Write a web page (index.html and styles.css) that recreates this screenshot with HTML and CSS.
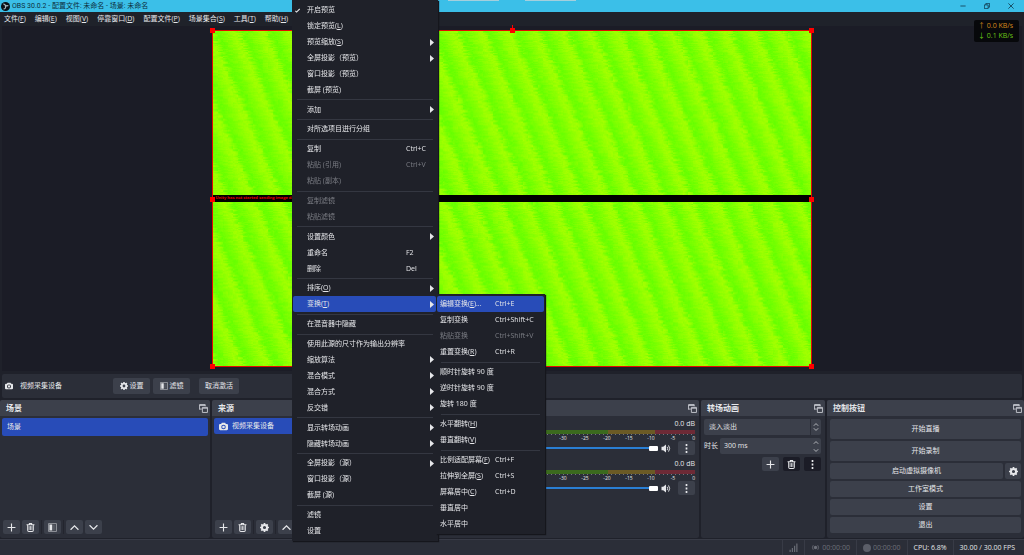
FILE: index.html
```html
<!DOCTYPE html>
<html lang="zh-CN">
<head>
<meta charset="utf-8">
<title>OBS 30.0.2 - 配置文件: 未命名 - 场景: 未命名</title>
<link rel="stylesheet" href="styles.css">
</head>
<body>
<svg class="sprite" aria-hidden="true">
  <symbol id="plus" viewBox="0 0 16 16"><path d="M8 1v14M1 8h14" fill="none" stroke="currentColor" stroke-width="2"/></symbol>
  <symbol id="trash" viewBox="0 0 16 16"><path d="M1 3h14M6 3V1h4v2M3 3v10q0 2 2 2h6q2 0 2-2V3" fill="none" stroke="currentColor" stroke-width="1.8"/><path d="M5.500 5.500v7M8 5.500v7M10.500 5.500v7" stroke="currentColor" stroke-width="1.400"/></symbol>
  <symbol id="filter" viewBox="0 0 16 16"><path d="M1 1h14v14H1z" fill="none" stroke="currentColor" stroke-width="1.300" opacity=".7"/><path d="M2.500 2.500h5v11h-5z" fill="currentColor"/><path d="M9.500 3v10M12 3v10" stroke="currentColor" opacity=".35"/></symbol>
  <symbol id="gear" viewBox="0 0 16 16"><circle cx="8" cy="8" r="4.600" fill="none" stroke="currentColor" stroke-width="3.600"/><path d="M8 0v3M8 13v3M0 8h3M13 8h3M2.300 2.300l2.200 2.200M11.500 11.500l2.200 2.200M13.700 2.300l-2.200 2.200M4.500 11.500l-2.200 2.200" stroke="currentColor" stroke-width="3"/></symbol>
  <symbol id="up" viewBox="0 0 16 16"><path d="M1 12l7-7 7 7" fill="none" stroke="currentColor" stroke-width="2.200"/></symbol>
  <symbol id="down" viewBox="0 0 16 16"><path d="M1 4l7 7 7-7" fill="none" stroke="currentColor" stroke-width="2.200"/></symbol>
  <symbol id="camera" viewBox="0 0 16 16"><path fill="currentColor" fill-rule="evenodd" d="M5 1.500h6l1.200 2H14q2 0 2 2v7q0 2-2 2H2q-2 0-2-2v-7q0-2 2-2h1.800zM8 5a4 4 0 100 8 4 4 0 000-8z"/><circle cx="8" cy="9" r="2.300" fill="currentColor"/></symbol>
  <symbol id="float" viewBox="0 0 16 16"><path d="M1 10V1h10v3M1 2.500h10M1 9h4" fill="none" stroke="currentColor" stroke-width="1.600"/><path d="M6 6h9v9H6zM6 7.500h9" fill="none" stroke="currentColor" stroke-width="1.600"/></symbol>
  <symbol id="dots" viewBox="0 0 16 16"><path d="M6.500 0h3v3.400h-3zM6.500 6.300h3v3.400h-3zM6.500 12.600h3V16h-3z" fill="currentColor"/></symbol>
  <symbol id="speaker" viewBox="0 0 16 16"><path d="M0 5h3l5-4v14l-5-4H0z" fill="currentColor"/><path d="M10 5q2 3 0 6M12.500 2.500q4 5.500 0 11" fill="none" stroke="currentColor" stroke-width="1.700"/></symbol>
  <symbol id="arrow" viewBox="0 0 8 14"><path d="M0 0l8 7-8 7z" fill="currentColor"/></symbol>
  <symbol id="check" viewBox="0 0 16 16"><path d="M1 9l4 4L15 3" fill="none" stroke="currentColor" stroke-width="3.500"/></symbol>
</svg>

<header class="titlebar">
  <svg class="logo" viewBox="0 0 16 16"><circle cx="8" cy="8" r="8" fill="#0a1016"/><path d="M4 3.500q4 0 4 4.500 3-3 5-.5M8 8q1 4-3.500 4.500" fill="none" stroke="#a9b9c0" stroke-width="2"/></svg>
  <span class="title">OBS 30.0.2 - 配置文件: 未命名 - 场景: 未命名</span>
  <span class="behind"><i></i><i></i></span>
  <span class="winbtns">
    <button type="button" aria-label="最小化"><svg viewBox="0 0 16 16"><path d="M1 8h14" stroke="currentColor" stroke-width="2"/></svg></button>
    <button type="button" aria-label="还原"><svg viewBox="0 0 16 16"><path d="M1 5h10v10H1zM5 5V1h10v10h-4" fill="none" stroke="currentColor" stroke-width="2"/></svg></button>
    <button type="button" aria-label="关闭"><svg viewBox="0 0 16 16"><path d="M1 1l14 14M15 1L1 15" stroke="currentColor" stroke-width="2"/></svg></button>
  </span>
</header>
<nav class="menubar">
  <a href="#">文件(<u>F</u>)</a><a href="#">编辑(<u>E</u>)</a><a href="#">视图(<u>V</u>)</a><a href="#">停靠窗口(<u>D</u>)</a><a href="#">配置文件(<u>P</u>)</a><a href="#">场景集合(<u>S</u>)</a><a href="#">工具(<u>T</u>)</a><a href="#">帮助(<u>H</u>)</a>
</nav>

<main class="preview">
  <div class="frame">
    <canvas id="feed" width="598" height="337"></canvas>
    <div class="notice">Unity has not started sending image data</div>
    <i class="handle tl"></i><i class="handle tc"></i><i class="handle tr"></i><i class="handle ml"></i><i class="handle mr"></i><i class="handle bl"></i><i class="handle br"></i>
  </div>
  <div class="netstats"><span class="upload">↑ 0.0 KB/s</span><span class="download">↓ 0.1 KB/s</span></div>
</main>

<section class="context">
  <svg class="ico"><use href="#camera"/></svg><span class="context-name">视频采集设备</span>
  <button type="button" class="btn"><svg class="ico"><use href="#gear"/></svg>设置</button>
  <button type="button" class="btn"><svg class="ico"><use href="#filter"/></svg>滤镜</button>
  <button type="button" class="btn detach">取消激活</button>
</section>

<section class="docks">
  <article class="dock">
    <h2>场景<svg class="float"><use href="#float"/></svg></h2>
    <ul class="list"><li class="scene">场景</li></ul>
    <div class="tools">
      <button type="button" class="btn" aria-label="添加"><svg class="ico"><use href="#plus"/></svg></button>
      <button type="button" class="btn" aria-label="删除"><svg class="ico"><use href="#trash"/></svg></button><i class="bar"></i>
      <button type="button" class="btn" aria-label="滤镜"><svg class="ico"><use href="#filter"/></svg></button><i class="bar"></i>
      <button type="button" class="btn" aria-label="上移"><svg class="ico"><use href="#up"/></svg></button>
      <button type="button" class="btn" aria-label="下移"><svg class="ico"><use href="#down"/></svg></button>
    </div>
  </article>
  <article class="dock">
    <h2>来源<svg class="float"><use href="#float"/></svg></h2>
    <ul class="list"><li><svg class="ico"><use href="#camera"/></svg>视频采集设备</li></ul>
    <div class="tools">
      <button type="button" class="btn" aria-label="添加"><svg class="ico"><use href="#plus"/></svg></button>
      <button type="button" class="btn" aria-label="删除"><svg class="ico"><use href="#trash"/></svg></button><i class="bar"></i>
      <button type="button" class="btn" aria-label="属性"><svg class="ico"><use href="#gear"/></svg></button><i class="bar"></i>
      <button type="button" class="btn" aria-label="上移"><svg class="ico"><use href="#up"/></svg></button>
      <button type="button" class="btn" aria-label="下移"><svg class="ico"><use href="#down"/></svg></button>
    </div>
  </article>
  <article class="dock">
    <h2><span></span><svg class="float"><use href="#float"/></svg></h2>
    <div class="mixer">
      <div class="channel">
        <div class="db">0.0 dB</div>
        <div class="meter"></div>
        <div class="scale"><i>-60</i><i>-55</i><i>-50</i><i>-45</i><i>-40</i><i>-35</i><i>-30</i><i>-25</i><i>-20</i><i>-15</i><i>-10</i><i>-5</i><i>0</i></div>
        <div class="volume"><input type="range" value="100" aria-label="音量"><svg class="speaker"><use href="#speaker"/></svg><button type="button" class="btn" aria-label="更多"><svg class="ico"><use href="#dots"/></svg></button></div>
      </div>
      <div class="channel">
        <div class="db">0.0 dB</div>
        <div class="meter"></div>
        <div class="scale"><i>-60</i><i>-55</i><i>-50</i><i>-45</i><i>-40</i><i>-35</i><i>-30</i><i>-25</i><i>-20</i><i>-15</i><i>-10</i><i>-5</i><i>0</i></div>
        <div class="volume"><input type="range" value="100" aria-label="音量"><svg class="speaker"><use href="#speaker"/></svg><button type="button" class="btn" aria-label="更多"><svg class="ico"><use href="#dots"/></svg></button></div>
      </div>
    </div>
  </article>
  <article class="dock">
    <h2>转场动画<svg class="float"><use href="#float"/></svg></h2>
    <div class="transition">
      <label class="combo"><select aria-label="转场"><option>淡入淡出</option></select><span class="steps split"><svg><use href="#up"/></svg><svg><use href="#down"/></svg></span></label>
      <div class="duration"><label for="ms">时长</label><span class="combo"><input id="ms" type="text" value="300 ms"><span class="steps"><svg><use href="#up"/></svg><svg><use href="#down"/></svg></span></span></div>
      <div class="trans-tools">
        <button type="button" class="btn" aria-label="添加"><svg class="ico"><use href="#plus"/></svg></button>
        <button type="button" class="btn dark" aria-label="删除"><svg class="ico"><use href="#trash"/></svg></button>
        <button type="button" class="btn dark" aria-label="更多"><svg class="ico"><use href="#dots"/></svg></button>
      </div>
    </div>
  </article>
  <article class="dock">
    <h2>控制按钮<svg class="float"><use href="#float"/></svg></h2>
    <div class="controls">
      <button type="button" class="btn tall">开始直播</button>
      <button type="button" class="btn tall">开始录制</button>
      <div class="pair"><button type="button" class="btn">启动虚拟摄像机</button><button type="button" class="btn square" aria-label="虚拟摄像机设置"><svg class="ico"><use href="#gear"/></svg></button></div>
      <button type="button" class="btn">工作室模式</button>
      <button type="button" class="btn">设置</button>
      <button type="button" class="btn">退出</button>
    </div>
  </article>
</section>

<footer class="status">
  <span><svg class="ico" viewBox="0 0 16 16"><path d="M1 12h2v4H1zM5 9h2v7H5zM9 5h2v11H9zM13 1h2v15h-2z" fill="currentColor"/></svg></span>
  <span><svg class="ico" viewBox="0 0 16 16"><circle cx="8" cy="8" r="3" fill="currentColor"/><path d="M4 4q-3 4 0 8M12 4q3 4 0 8" fill="none" stroke="currentColor" stroke-width="1.500"/></svg>00:00:00</span>
  <span><i class="rec"></i>00:00:00</span>
  <span class="bright">CPU: 6.8%</span>
  <span class="bright">30.00 / 30.00 FPS</span>
</footer>

<div class="menu main-menu" role="menu">
  <button type="button"><svg class="check"><use href="#check"/></svg>开启预览</button>
  <button type="button">锁定预览(<u>L</u>)</button>
  <button type="button">预览缩放(<u>S</u>)<svg class="more"><use href="#arrow"/></svg></button>
  <button type="button">全屏投影（预览）<svg class="more"><use href="#arrow"/></svg></button>
  <button type="button">窗口投影（预览）</button>
  <button type="button">截屏 (预览)</button>
  <hr>
  <button type="button">添加<svg class="more"><use href="#arrow"/></svg></button>
  <hr>
  <button type="button">对所选项目进行分组</button>
  <hr>
  <button type="button">复制<kbd>Ctrl+C</kbd></button>
  <button type="button" disabled>粘贴 (引用)<kbd>Ctrl+V</kbd></button>
  <button type="button" disabled>粘贴 (副本)</button>
  <hr>
  <button type="button" disabled>复制滤镜</button>
  <button type="button" disabled>粘贴滤镜</button>
  <hr>
  <button type="button">设置颜色<svg class="more"><use href="#arrow"/></svg></button>
  <button type="button">重命名<kbd>F2</kbd></button>
  <button type="button">删除<kbd>Del</kbd></button>
  <hr>
  <button type="button">排序(<u>O</u>)<svg class="more"><use href="#arrow"/></svg></button>
  <button type="button" class="active">变换(<u>T</u>)<svg class="more"><use href="#arrow"/></svg></button>
  <hr>
  <button type="button">在混音器中隐藏</button>
  <hr>
  <button type="button">使用此源的尺寸作为输出分辨率</button>
  <button type="button">缩放算法<svg class="more"><use href="#arrow"/></svg></button>
  <button type="button">混合模式<svg class="more"><use href="#arrow"/></svg></button>
  <button type="button">混合方式<svg class="more"><use href="#arrow"/></svg></button>
  <button type="button">反交错<svg class="more"><use href="#arrow"/></svg></button>
  <hr>
  <button type="button">显示转场动画<svg class="more"><use href="#arrow"/></svg></button>
  <button type="button">隐藏转场动画<svg class="more"><use href="#arrow"/></svg></button>
  <hr>
  <button type="button">全屏投影（源）<svg class="more"><use href="#arrow"/></svg></button>
  <button type="button">窗口投影（源）</button>
  <button type="button">截屏 (源)</button>
  <hr>
  <button type="button">滤镜</button>
  <button type="button">设置</button>
</div>

<div class="menu sub-menu" role="menu">
  <button type="button" class="active">编辑变换(<u>E</u>)...<kbd>Ctrl+E</kbd></button>
  <button type="button">复制变换<kbd>Ctrl+Shift+C</kbd></button>
  <button type="button" disabled>粘贴变换<kbd>Ctrl+Shift+V</kbd></button>
  <button type="button">重置变换(<u>R</u>)<kbd>Ctrl+R</kbd></button>
  <hr>
  <button type="button">顺时针旋转 90 度</button>
  <button type="button">逆时针旋转 90 度</button>
  <button type="button">旋转 180 度</button>
  <hr>
  <button type="button">水平翻转(<u>H</u>)</button>
  <button type="button">垂直翻转(<u>V</u>)</button>
  <hr>
  <button type="button">比例适配屏幕(<u>F</u>)<kbd>Ctrl+F</kbd></button>
  <button type="button">拉伸到全屏(<u>S</u>)<kbd>Ctrl+S</kbd></button>
  <button type="button">屏幕居中(<u>C</u>)<kbd>Ctrl+D</kbd></button>
  <button type="button">垂直居中</button>
  <button type="button">水平居中</button>
</div>
<script src="feed.js"></script>
</body>
</html>
```
FILE: styles.css
```css
* { box-sizing: border-box; }
body {
  margin: 0;
  height: 100vh;
  overflow: hidden;
  display: flex;
  flex-direction: column;
  background: #1f212a;
  color: #e6e7ea;
  font: 7px/10px "Open Sans", "Noto Sans CJK SC", sans-serif;
}
button, input, select { font: inherit; color: inherit; border: 0; margin: 0; padding: 0; background: none; }
ul { list-style: none; margin: 0; padding: 0; }
a { color: inherit; text-decoration: none; }
i { font-style: normal; }
svg { display: block; flex: none; }
.sprite { position: absolute; width: 0; height: 0; }
.ico { width: 9px; height: 9px; }

.titlebar { display: flex; align-items: center; height: 12px; flex: none; padding-left: 1px; background: #3bbfe8; color: #0d2f40; }
.logo { width: 9px; height: 9px; margin-right: 2px; }
.title { width: 436px; font-family: Roboto, "Noto Sans CJK SC", sans-serif; }
.behind { display: flex; gap: 26px; align-self: flex-start; flex: 1; }
.behind i { width: 51px; height: 1px; background: #a4cfdd; }
.winbtns { display: flex; gap: 18px; padding-right: 10px; }
.winbtns svg { width: 6px; height: 6px; }
.winbtns button { display: flex; }

.menubar { display: flex; align-items: center; gap: 9px; height: 14px; flex: none; padding-left: 4px; background: #1f222a; }
.menubar a { white-space: nowrap; }

.preview { position: relative; flex: 1; min-height: 0; margin: 0 2px; padding: 4px 0; display: flex; justify-content: center; align-items: center; background: #1b1c26; }
.frame { position: relative; height: 100%; aspect-ratio: 16 / 9; border: 1px solid #e60a00; background: #000; }
.frame canvas { display: block; width: 100%; height: 100%; }
.notice { position: absolute; left: 0; right: 0; top: 49%; height: 7px; padding-left: 2px; background: #000; color: #e00000; font: bold 4px/6px "Open Sans", sans-serif; }
.handle { position: absolute; width: 5px; height: 5px; background: #f00; }
.tl, .ml, .bl { left: -3px; }
.tr, .mr, .br { right: -3px; }
.tl, .tc, .tr { top: -3px; }
.bl, .br { bottom: -3px; }
.ml, .mr { top: calc(50% - 2px); }
.tc { left: calc(50% - 2px); }
.tc::before { content: ""; position: absolute; left: 2px; top: -3px; width: 1px; height: 3px; background: #f00; }
.netstats { position: absolute; right: 3px; top: -6px; width: 45px; height: 22px; padding: 1px 4px; display: flex; flex-direction: column; border-radius: 2px; background: #07080b; white-space: nowrap; }
.upload { color: #d98a1c; }
.download { color: #6cc516; }

.context { display: flex; align-items: center; height: 24px; flex: none; margin: 3px 2px 2px; padding-left: 3px; background: #2b2e38; border-radius: 2px; }
.context-name { width: 93px; margin-left: 7px; }
.context .btn { height: 16px; width: 37px; margin-right: 3px; gap: 2px; }
.context .ico { width: 8px; height: 8px; }
.context .detach { width: 40px; margin-left: 6px; }
.btn { display: flex; align-items: center; justify-content: center; border-radius: 2px; background: #3c404b; white-space: nowrap; }

.docks { display: grid; grid-template-columns: 210fr 210fr 275fr 124fr 197fr; gap: 2px; flex: none; height: 138px; }
.dock { display: flex; flex-direction: column; min-width: 0; background: #2b2e38; border-radius: 2px; overflow: hidden; }
.dock h2 { display: flex; align-items: center; justify-content: space-between; height: 16px; flex: none; margin: 0; padding: 0 2px 0 6px; background: #3c404b; font-size: 8px; font-weight: 700; }
.float { width: 9px; height: 9px; color: #c9ccd2; }
.list { flex: 1; padding: 2px; }
.list li { display: flex; align-items: center; gap: 4px; height: 16px; padding: 0 5px; border-radius: 2px; background: #284cb8; }
.list .scene { height: 18px; }
.tools { display: flex; gap: 2px; padding: 4px 3px; }
.tools .btn, .trans-tools .btn, .volume .btn { width: 17px; height: 14px; }
.bar { width: 1px; background: #23252e; }

.mixer { padding: 3px 4px 0 7px; }
.channel { height: 40px; }
.db { text-align: right; height: 11px; }
.meter { height: 4px; background: linear-gradient(to right, #3b6a1e 67%, #6b5a25 67% 85%, #6d2a36 85%); }
.scale { display: flex; justify-content: space-between; height: 7px; font-size: 5px; line-height: 8px; background: repeating-linear-gradient(to right, #73767e 0 1px, transparent 1px 4px) 0 0 / 100% 1px no-repeat; }
.scale i { display: flex; width: 0; justify-content: center; }
.scale i:last-child { justify-content: flex-end; }
.volume { display: flex; align-items: center; height: 14px; }
.volume input { -webkit-appearance: none; appearance: none; flex: 1; min-width: 0; height: 5px; background: linear-gradient(#2a7fd4, #2a7fd4) center / 100% 2px no-repeat; }
.volume input::-webkit-slider-thumb { -webkit-appearance: none; width: 9px; height: 5px; border-radius: 1px; background: #fff; }
.speaker { width: 10px; height: 9px; margin: 0 7px 0 3px; }

.transition { display: flex; flex-direction: column; gap: 3px; padding: 3px 4px 0 3px; }
.combo { display: flex; flex: 1; min-width: 0; height: 16px; border-radius: 2px; background: #3c404b; overflow: hidden; }
.transition > .combo { flex: none; }
.combo select { -webkit-appearance: none; appearance: none; flex: 1; min-width: 0; padding-left: 5px; }
.combo input { flex: 1; min-width: 0; padding-left: 4px; }
.steps { display: flex; flex-direction: column; align-items: center; justify-content: center; gap: 3px; width: 11px; }
.steps svg { width: 6px; height: 5px; }
.split { border-left: 1px solid #2b2e38; gap: 0; }
.duration { display: flex; align-items: center; gap: 2px; }
.trans-tools { display: flex; justify-content: flex-end; gap: 4px; }
.dark { background: #1b1c26; }

.controls { display: flex; flex-direction: column; gap: 2px; padding: 3px; }
.controls .btn { height: 16px; }
.controls .tall { height: 20px; }
.pair { display: flex; gap: 2px; }
.pair .btn { flex: 1; }
.pair .square { flex: none; width: 16px; }

.status { display: flex; justify-content: flex-end; flex: none; height: 16px; margin-top: 1px; padding-right: 3px; background: #2b2e38; border-top: 1px solid #383b46; color: #6d7079; white-space: nowrap; }
.status span { display: flex; align-items: center; gap: 2px; padding: 0 6px; border-left: 1px solid #383b46; }
.status .bright { color: #e6e7ea; }
.rec { width: 8px; height: 8px; border-radius: 50%; background: #5b5e68; }

.menu { position: absolute; display: flex; flex-direction: column; padding: 2px 1px; background: #1f2129; box-shadow: 1px 1px 1px #15161c; }
.main-menu { left: 292px; top: 0; width: 146px; max-height: calc(100vh - 14px); }
.sub-menu { left: 436px; top: 294px; width: 109px; }
.menu button { position: relative; display: flex; align-items: center; flex: none; height: 16px; border-radius: 2px; text-align: left; white-space: nowrap; }
.main-menu button { margin-right: 1px; padding-left: 14px; }
.sub-menu button { padding-left: 3px; }
.menu hr { width: auto; height: 4px; margin: 0 4px; border: 0; background: linear-gradient(#343741, #343741) center / 100% 1px no-repeat; }
.menu button:disabled { color: #7b7d84; }
.menu .active { background: #284cb8; }
.menu kbd { position: absolute; font: inherit; }
.main-menu kbd { left: 113px; }
.sub-menu kbd { left: 58px; }
.more { width: 4px; height: 7px; margin-left: auto; margin-right: 2px; }
.check { position: absolute; left: 2px; width: 5px; height: 5px; }
```
FILE: feed.js
```js
const canvas = document.getElementById("feed");
const ctx = canvas.getContext("2d");
const { width, height } = canvas;
const frame = ctx.createImageData(width, height);
const period = 27.3;
let seed = 7;
const random = () => (seed = (seed * 16807) % 2147483647) / 2147483647;

// Green-to-yellow bands leaning right: slow rise, quick fall, ragged scanlines.
for (let y = 0; y < height; y++) {
  let jitter = 0;
  for (let x = 0; x < width; x++) {
    if (x % 5 === 0) jitter = (random() - 0.5) * 7;
    const pos = x - 240 - 0.42 * y + jitter + 100 * period;
    const t = (pos / period) % 1;
    const level = t < 0.3 ? 1 - t / 0.3 : (t - 0.3) / 0.7;
    const i = (y * width + x) * 4;
    frame.data[i] = 102 + 62 * level + (random() - 0.5) * 8;
    frame.data[i + 1] = 255;
    frame.data[i + 2] = 0;
    frame.data[i + 3] = 255;
  }
}
ctx.putImageData(frame, 0, 0);
```
